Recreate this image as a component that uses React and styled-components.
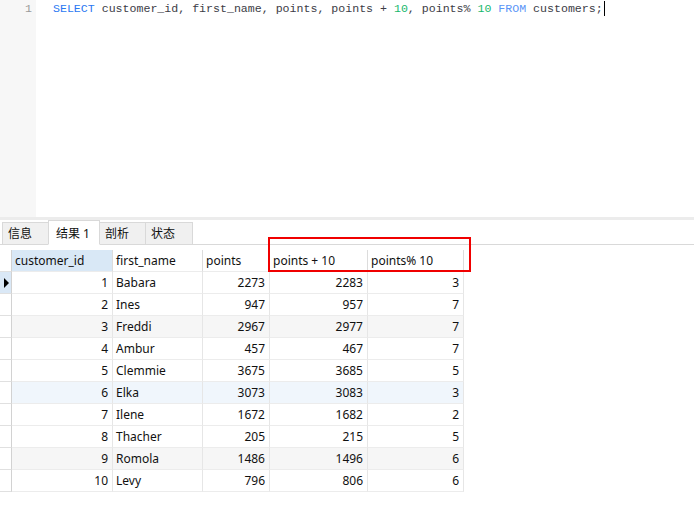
import styled, { createGlobalStyle } from "styled-components";

const GlobalStyle = createGlobalStyle`
  html, body {
    margin: 0;
    padding: 0;
    background: #ffffff;
  }
  body {
    font-family: "Noto Sans", "Noto Sans CJK SC", sans-serif;
    color: #1a1a1a;
  }
`;

const Page = styled.div`
  width: 694px;
  height: 522px;
  display: flex;
  flex-direction: column;
  overflow: hidden;
`;

const Editor = styled.div`
  height: 217px;
  display: flex;
`;

const Gutter = styled.div`
  width: 36px;
  background: #f7f7f7;
  box-sizing: border-box;
  padding: 1px 4px 0 0;
  text-align: right;
  font-family: "Liberation Mono", monospace;
  font-size: 11.6px;
  line-height: 15px;
  color: #9a9a9a;
`;

const Code = styled.div`
  padding: 1px 0 0 17px;
  font-family: "Liberation Mono", monospace;
  font-size: 11.6px;
  line-height: 15px;
  color: #3c3c46;
  white-space: pre;
`;

const Keyword = styled.span`
  color: ${(p) => (p.light ? "#5b95f7" : "#2a78f2")};
`;

const Num = styled.span`
  color: #19b86e;
`;

const Caret = styled.span`
  display: inline-block;
  width: 1px;
  height: 15px;
  background: #000;
  vertical-align: top;
  margin-left: 1px;
`;

const Divider = styled.div`
  height: 3px;
  background: #ececec;
`;

const TabBar = styled.div`
  height: 25px;
  display: flex;
  align-items: flex-end;
  padding-left: 2px;
  border-bottom: 1px solid #d9d9d9;
  box-sizing: border-box;
`;

const Tab = styled.div`
  width: ${(p) => p.w}px;
  height: ${(p) => (p.active ? 25 : 22)}px;
  box-sizing: border-box;
  border: 1px solid #d9d9d9;
  border-bottom: ${(p) => (p.active ? "1px solid #ffffff" : "none")};
  margin-bottom: ${(p) => (p.active ? -1 : 0)}px;
  margin-left: -1px;
  background: ${(p) => (p.active ? "#ffffff" : "#f0f0f0")};
  font-size: 12px;
  line-height: 20px;
  padding-left: ${(p) => (p.active ? 7 : 5)}px;
  padding-top: ${(p) => (p.active ? 3 : 1)}px;
  color: #111;
  position: relative;
  z-index: ${(p) => (p.active ? 1 : 0)};
  &:first-child {
    margin-left: 0;
  }
`;

const GridWrap = styled.div`
  position: relative;
  margin-top: 5px;
  width: 464px;
`;

const Grid = styled.div`
  display: grid;
  grid-template-columns: 12px 101px 90px 67px 98px 96px;
  grid-auto-rows: 22px;
  font-size: 12px;
`;

const Cell = styled.div`
  box-sizing: border-box;
  border-right: 1px solid #e6e6e6;
  border-bottom: 1px solid #ececec;
  padding: 0 4px 0 3px;
  line-height: 21px;
  white-space: nowrap;
  overflow: hidden;
  text-align: ${(p) => (p.num ? "right" : "left")};
  background: ${(p) => p.bg || "transparent"};
  color: #111;
`;

const HeadCell = styled(Cell)`
  background: ${(p) => (p.selected ? "#d9e8f6" : "#ffffff")};
  border-right-color: #dcdcdc;
`;

const Indicator = styled.div`
  box-sizing: border-box;
  border-right: 1px solid #d2d2d2;
  border-bottom: 1px solid #e0e0e0;
  background: ${(p) => (p.current ? "#dae8f6" : "#ffffff")};
  display: flex;
  align-items: center;
  padding-left: 4px;
`;

const Arrow = styled.span`
  width: 0;
  height: 0;
  border-top: 5px solid transparent;
  border-bottom: 5px solid transparent;
  border-left: 5px solid #000;
`;

const Highlight = styled.div`
  position: absolute;
  left: 268px;
  top: -13px;
  width: 203px;
  height: 35px;
  box-sizing: border-box;
  border: 2px solid #f00000;
  pointer-events: none;
`;

const columns = ["customer_id", "first_name", "points", "points + 10", "points% 10"];

const rows = [
  [1, "Babara", 2273, 2283, 3],
  [2, "Ines", 947, 957, 7],
  [3, "Freddi", 2967, 2977, 7],
  [4, "Ambur", 457, 467, 7],
  [5, "Clemmie", 3675, 3685, 5],
  [6, "Elka", 3073, 3083, 3],
  [7, "Ilene", 1672, 1682, 2],
  [8, "Thacher", 205, 215, 5],
  [9, "Romola", 1486, 1496, 6],
  [10, "Levy", 796, 806, 6],
];

const rowBg = (i) => {
  if (i === 5) return "#f0f6fc";
  if (i === 2 || i === 8) return "#f6f6f6";
  return "#ffffff";
};

const tabs = [
  { label: "信息", w: 47 },
  { label: "结果 1", w: 52, active: true },
  { label: "剖析", w: 47 },
  { label: "状态", w: 48 },
];

const App = () => {
  return (
    <Page>
      <GlobalStyle />
      <Editor>
        <Gutter>1</Gutter>
        <Code>
          <Keyword>SELECT</Keyword> customer_id, first_name, points, points + <Num>10</Num>, points% <Num>10</Num>{" "}
          <Keyword light>FROM</Keyword> customers;<Caret />
        </Code>
      </Editor>
      <Divider />
      <TabBar>
        {tabs.map((t) => (
          <Tab key={t.label} w={t.w} active={t.active}>
            {t.label}
          </Tab>
        ))}
      </TabBar>
      <GridWrap>
        <Grid>
          <Indicator />
          {columns.map((c, i) => (
            <HeadCell key={c} selected={i === 0}>
              {c}
            </HeadCell>
          ))}
          {rows.map((r, i) => (
            <>
              <Indicator key={"ind" + i} current={i === 0}>
                {i === 0 && <Arrow />}
              </Indicator>
              {r.map((v, j) => (
                <Cell key={i + "-" + j} num={j !== 1} bg={rowBg(i)}>
                  {v}
                </Cell>
              ))}
            </>
          ))}
        </Grid>
        <Highlight />
      </GridWrap>
    </Page>
  );
};

export default App;
